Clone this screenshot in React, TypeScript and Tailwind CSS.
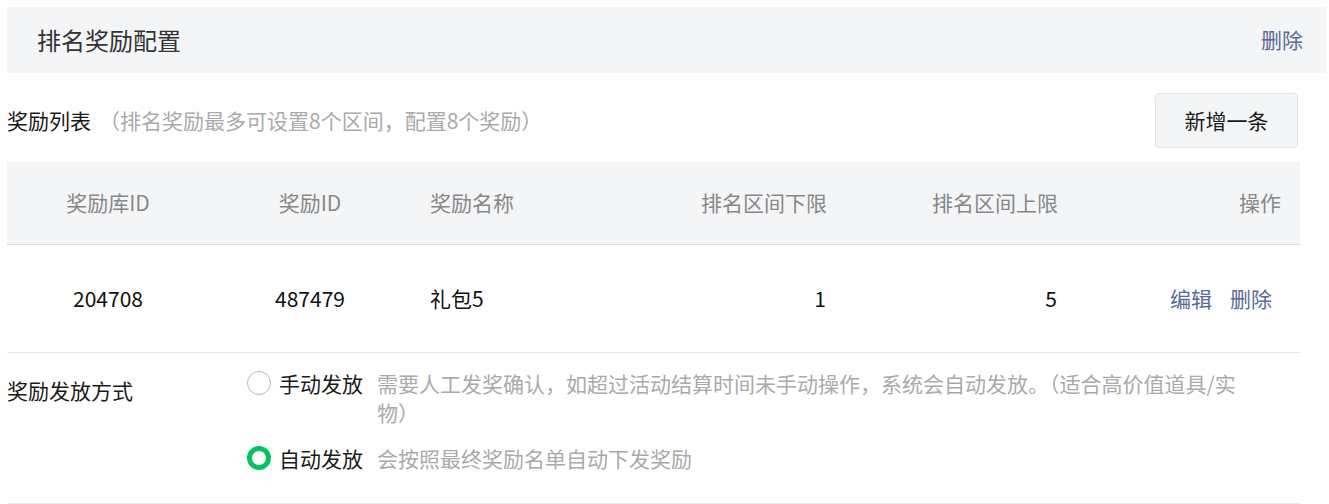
import React from 'react';

const columns = [
  { title: '奖励库ID', cls: 'text-center' },
  { title: '奖励ID', cls: 'text-center' },
  { title: '奖励名称', cls: 'text-left pl-[19px]' },
  { title: '排名区间下限', cls: 'text-right pr-[20px]' },
  { title: '排名区间上限', cls: 'text-right pr-[20px]' },
  { title: '操作', cls: 'text-right pr-[19px]' },
];

const rows = [{ libId: '204708', rewardId: '487479', name: '礼包5', min: 1, max: 5 }];

const gridCols = 'grid grid-cols-[202px_202px_206px_230px_231px_1fr]';

const Radio = ({ checked }: { checked: boolean }) =>
  checked ? (
    <span className="mt-[2px] h-6 w-6 shrink-0 rounded-full border-[5px] border-[#07c160] bg-white" />
  ) : (
    <span className="mt-[2px] h-6 w-6 shrink-0 rounded-full border border-[#b8b8b8] bg-white" />
  );

const App = () => {
  return (
    <div className="min-h-screen bg-white pt-[7px] pl-[7px] pr-[3px] font-['Noto_Sans_CJK_SC',sans-serif] text-[21px] text-[#1a1a1a]">
      {/* Header */}
      <div className="flex h-[66px] items-center justify-between bg-[#f4f5f7] pl-[30px] pr-[23px]">
        <h2 className="text-[24px] text-[#333]">排名奖励配置</h2>
        <button className="text-[21px] text-[#576b95]">删除</button>
      </div>

      <div className="pr-[26px]">
        {/* Reward list title */}
        <div className="mt-5 flex h-[55px] items-center justify-between">
          <div className="flex items-center">
            <span className="text-[#1a1a1a]">奖励列表</span>
            <span className="ml-[8px] text-[#aaa]">（排名奖励最多可设置8个区间，配置8个奖励）</span>
          </div>
          <button className="mr-[2px] h-[55px] w-[143px] rounded-[4px] border border-[#e3e4e6] bg-[#f4f5f7] text-[#1a1a1a]">
            新增一条
          </button>
        </div>

        {/* Table */}
        <div className="mt-[14px]">
          <div className={`${gridCols} h-[83px] items-center border-b border-[#dcdcdc] bg-[#f4f5f7] text-[#888]`}>
            {columns.map((c) => (
              <div key={c.title} className={c.cls}>
                {c.title}
              </div>
            ))}
          </div>
          {rows.map((r) => (
            <div key={r.rewardId} className={`${gridCols} h-[108px] items-center border-b border-[#e6e6e6] text-[#111]`}>
              <div className="text-center">{r.libId}</div>
              <div className="text-center">{r.rewardId}</div>
              <div className="pl-[19px] text-left">{r.name}</div>
              <div className="pr-[21px] text-right">{r.min}</div>
              <div className="pr-[21px] text-right">{r.max}</div>
              <div className="flex justify-end gap-[18px] pr-[28px] text-[#576b95]">
                <button>编辑</button>
                <button>删除</button>
              </div>
            </div>
          ))}
        </div>

        {/* Distribution method */}
        <div className="flex border-b border-[#ececec] pt-4 pb-[30px]">
          <div className="w-[240px] shrink-0 pt-[7px] leading-[29px]">奖励发放方式</div>
          <div className="flex flex-col gap-[17px] pr-[40px]">
            <label className="flex gap-2 leading-[29px]">
              <Radio checked={false} />
              <span className="shrink-0">手动发放</span>
              <span className="ml-[6px] text-[#aaa]">
                需要人工发奖确认，如超过活动结算时间未手动操作，系统会自动发放。（适合高价值道具/实物）
              </span>
            </label>
            <label className="flex gap-2 leading-[29px]">
              <Radio checked />
              <span className="shrink-0">自动发放</span>
              <span className="ml-[6px] text-[#aaa]">会按照最终奖励名单自动下发奖励</span>
            </label>
          </div>
        </div>
      </div>
    </div>
  );
};

export default App;
